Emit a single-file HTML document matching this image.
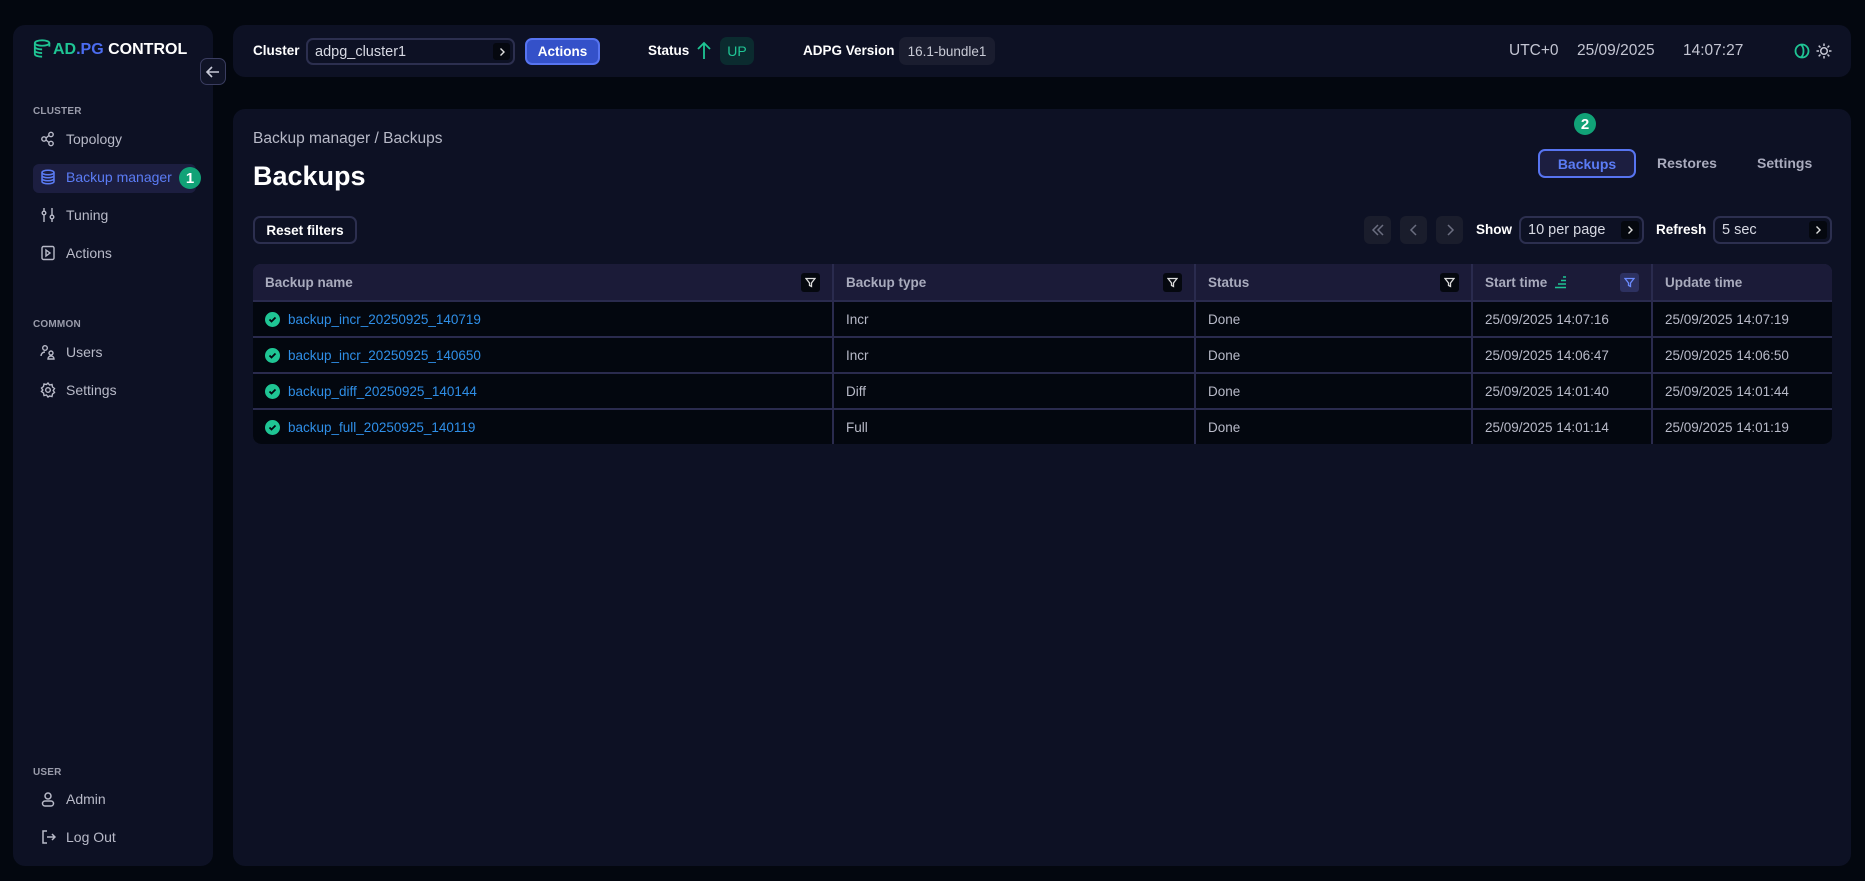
<!DOCTYPE html>
<html><head><meta charset="utf-8"><style>
*{box-sizing:border-box;margin:0;padding:0}
body{width:1865px;height:881px;background:#03070f;font-family:"Liberation Sans",sans-serif;color:#c9cbd6;position:relative;overflow:hidden;font-size:14px}
.abs{position:absolute}
.panel{position:absolute;background:#0d1124;border-radius:12px}
.sec{position:absolute;left:33px;font-size:10px;font-weight:bold;color:#9a9cab;letter-spacing:.2px}
.nav{position:absolute;left:40px;font-size:14px;color:#b8bac8;display:flex;align-items:center;gap:10px}
.nav svg{width:16px;height:16px}
.btn{position:absolute;border:2px solid #2c2f4f;border-radius:7px;display:flex;align-items:center}
.pg{position:absolute;width:27px;height:28px;background:#1a1d2c;border-radius:6px;top:216px;display:flex;align-items:center;justify-content:center}
.th{position:absolute;top:264px;height:36px;background:#1b1b38;font-size:13.5px;color:#a9abbd;font-weight:bold;display:flex;align-items:center;padding-left:12px}
.flt{position:absolute;right:12px;top:9px;width:19px;height:19px;background:#05080f;border-radius:3px;display:flex;align-items:center;justify-content:center}
.cell{position:absolute;height:34px;background:#03070f;font-size:13.5px;color:#b8bac8;display:flex;align-items:center;padding-left:12px}
.lnk{color:#2f8fe8}
.chk{width:15px;height:15px;border-radius:50%;background:#1fc594;display:inline-flex;align-items:center;justify-content:center;margin-right:8px}
</style></head><body>

<div class="panel" style="left:13px;top:25px;width:200px;height:841px"></div>
<svg class="abs" style="left:33px;top:38px" width="20" height="21" viewBox="0 0 22 22" fill="none" stroke="#1fc594" stroke-width="2"><ellipse cx="10" cy="5" rx="8" ry="3"/><path d="M2 5v12c0 2 4 3 8 3M2 9c0 2 4 3 8 3M2 13c0 2 4 3 8 3M18 5v4"/></svg>
<div class="abs" style="left:53px;top:41px;font-size:16px;font-weight:bold;letter-spacing:0"><span style="color:#1fc594">AD</span><span style="color:#4b6cf0">.PG</span> <span style="color:#fff">CONTROL</span></div>
<div class="abs" style="left:200px;top:58px;width:26px;height:27px;border:1.5px solid #3a3d60;border-radius:7px;background:#101427;display:flex;align-items:center;justify-content:center"><svg width="16" height="16" viewBox="0 0 16 16" fill="none" stroke="#c8cad8" stroke-width="1.6"><path d="M14 8H2M7 3L2 8l5 5"/></svg></div>

<div class="sec" style="top:106px">CLUSTER</div>
<div class="nav" style="top:131px"><svg viewBox="0 0 16 16" fill="none" stroke="#b8bac8" stroke-width="1.4"><circle cx="4" cy="8" r="2.2"/><circle cx="11" cy="3.5" r="2.2"/><circle cx="11" cy="12.5" r="2.2"/><path d="M6 7l3-2.5M6 9l3 2.5"/></svg>Topology</div>
<div class="abs" style="left:33px;top:164px;width:163px;height:29px;background:#1c1e40;border-radius:6px"></div>
<div class="nav" style="top:169px;color:#5b7cf5"><svg viewBox="0 0 16 16" fill="none" stroke="#5b7cf5" stroke-width="1.5"><ellipse cx="8" cy="3.5" rx="6" ry="2.3"/><path d="M2 3.5v9c0 1.3 2.7 2.3 6 2.3s6-1 6-2.3v-9M2 6.5c0 1.3 2.7 2.3 6 2.3s6-1 6-2.3M2 9.5c0 1.3 2.7 2.3 6 2.3s6-1 6-2.3"/></svg>Backup manager</div>
<div class="abs" style="left:179px;top:167px;width:22px;height:22px;border-radius:50%;background:#11a277;color:#fff;font-weight:bold;font-size:15px;display:flex;align-items:center;justify-content:center">1</div>
<div class="nav" style="top:207px"><svg viewBox="0 0 16 16" fill="none" stroke="#b8bac8" stroke-width="1.4"><path d="M4 1v14M12 1v14"/><circle cx="4" cy="6" r="1.8" fill="#0d1124"/><circle cx="12" cy="10" r="1.8" fill="#0d1124"/></svg>Tuning</div>
<div class="nav" style="top:245px"><svg viewBox="0 0 16 16" fill="none" stroke="#b8bac8" stroke-width="1.4"><rect x="2" y="1.5" width="12" height="13" rx="1.5"/><path d="M6 5l4 3-4 3z"/></svg>Actions</div>

<div class="sec" style="top:319px">COMMON</div>
<div class="nav" style="top:344px"><svg viewBox="0 0 16 16" fill="none" stroke="#b8bac8" stroke-width="1.4"><circle cx="5" cy="4" r="2.3"/><path d="M1 12c0-2.5 2-4 4-4"/><circle cx="11" cy="9" r="2"/><path d="M8 15c0-2 1.5-3 3-3s3 1 3 3z"/></svg>Users</div>
<div class="nav" style="top:382px"><svg viewBox="0 0 16 16" fill="none" stroke="#b8bac8" stroke-width="1.4"><circle cx="8" cy="8" r="2.3"/><path d="M8 1l1.5 2 2.5-.5.5 2.5 2 1.5-1.3 2 1.3 2-2 1.5-.5 2.5-2.5-.5L8 15l-1.5-2-2.5.5-.5-2.5-2-1.5L2.8 8 1.5 6l2-1.5.5-2.5 2.5.5z"/></svg>Settings</div>

<div class="sec" style="top:767px">USER</div>
<div class="nav" style="top:791px"><svg viewBox="0 0 16 16" fill="none" stroke="#b8bac8" stroke-width="1.5"><circle cx="8" cy="5" r="3"/><rect x="2.5" y="10" width="11" height="5" rx="2.5"/></svg>Admin</div>
<div class="nav" style="top:829px"><svg viewBox="0 0 16 16" fill="none" stroke="#b8bac8" stroke-width="1.5"><path d="M7 2H3v12h4M7 8h8M12 5l3 3-3 3"/></svg>Log Out</div>

<div class="panel" style="left:233px;top:25px;width:1618px;height:52px"></div>
<div class="abs" style="left:253px;top:43px;font-size:13.5px;font-weight:bold;color:#fff">Cluster</div>
<div class="btn" style="left:306px;top:38px;width:209px;height:27px;padding-left:7px;font-size:14.5px;color:#d8dae4">adpg_cluster1<div class="abs" style="right:3px;top:3px;width:17px;height:17px;background:#05080f;border-radius:3px;display:flex;align-items:center;justify-content:center"><svg width="10" height="10" viewBox="0 0 10 10" fill="none" stroke="#ddd" stroke-width="1.4"><path d="M3.5 1.5L7 5l-3.5 3.5"/></svg></div></div>
<div class="abs" style="left:525px;top:38px;width:75px;height:27px;background:#3451c9;border:2px solid #5774f0;border-radius:7px;color:#fff;font-weight:bold;font-size:13.5px;display:flex;align-items:center;justify-content:center">Actions</div>
<div class="abs" style="left:648px;top:43px;font-size:13.5px;font-weight:bold;color:#fff">Status</div>
<svg class="abs" style="left:696px;top:41px" width="16" height="19" viewBox="0 0 16 19" fill="none" stroke="#1fc594" stroke-width="1.8"><path d="M8 18V2M2 8l6-6 6 6"/></svg>
<div class="abs" style="left:720px;top:37px;width:34px;height:28px;background:#0b2b2f;border-radius:7px;color:#1fc594;font-size:14px;display:flex;align-items:center;justify-content:center">UP</div>
<div class="abs" style="left:803px;top:43px;font-size:13.5px;font-weight:bold;color:#fff">ADPG Version</div>
<div class="abs" style="left:899px;top:37px;width:96px;height:28px;background:#1a1d2f;border-radius:7px;color:#c9cbd6;font-size:13.5px;display:flex;align-items:center;justify-content:center">16.1-bundle1</div>
<div class="abs" style="left:1509px;top:42px;font-size:15.5px;color:#c3c5d2">UTC+0</div>
<div class="abs" style="left:1577px;top:42px;font-size:15.5px;color:#c3c5d2">25/09/2025</div>
<div class="abs" style="left:1683px;top:42px;font-size:15.5px;color:#c3c5d2">14:07:27</div>
<svg class="abs" style="left:1794px;top:43px" width="16" height="16" viewBox="0 0 16 16" fill="none" stroke="#1fc594" stroke-width="1.8"><circle cx="8" cy="8" r="6.5"/><path d="M7 1.8c2 1.5 2.5 3.5 2.5 6.2S9 12.7 7 14.2"/></svg>
<svg class="abs" style="left:1816px;top:43px" width="16" height="16" viewBox="0 0 16 16" fill="none" stroke="#c3c5d2" stroke-width="1.5"><circle cx="8" cy="8" r="3.3"/><path d="M8 0.5v2.5M8 13v2.5M0.5 8H3M13 8h2.5M2.7 2.7l1.8 1.8M11.5 11.5l1.8 1.8M2.7 13.3l1.8-1.8M11.5 4.5l1.8-1.8"/></svg>

<div class="panel" style="left:233px;top:109px;width:1618px;height:757px"></div>
<div class="abs" style="left:253px;top:130px;font-size:15.5px;color:#b8bac8">Backup manager / Backups</div>
<div class="abs" style="left:253px;top:161px;font-size:27px;font-weight:bold;color:#fff">Backups</div>
<div class="abs" style="left:1574px;top:113px;width:22px;height:22px;border-radius:50%;background:#11a277;color:#fff;font-weight:bold;font-size:15px;display:flex;align-items:center;justify-content:center">2</div>
<div class="abs" style="left:1538px;top:149px;width:98px;height:29px;border:2px solid #5774f0;background:#1c1e40;border-radius:7px;color:#5b7cf5;font-weight:bold;font-size:14px;display:flex;align-items:center;justify-content:center">Backups</div>
<div class="abs" style="left:1657px;top:155px;font-size:14px;font-weight:bold;color:#a9abbd">Restores</div>
<div class="abs" style="left:1757px;top:155px;font-size:14px;font-weight:bold;color:#a9abbd">Settings</div>

<div class="btn" style="left:253px;top:216px;width:104px;height:28px;justify-content:center;font-size:13.5px;font-weight:bold;color:#fff">Reset filters</div>

<div class="pg" style="left:1364px"><svg width="14" height="14" viewBox="0 0 14 14" fill="none" stroke="#6b6e80" stroke-width="1.5"><path d="M7 2L2 7l5 5M12 2L7 7l5 5"/></svg></div>
<div class="pg" style="left:1400px"><svg width="14" height="14" viewBox="0 0 14 14" fill="none" stroke="#6b6e80" stroke-width="1.5"><path d="M9 2L4 7l5 5"/></svg></div>
<div class="pg" style="left:1436px"><svg width="14" height="14" viewBox="0 0 14 14" fill="none" stroke="#6b6e80" stroke-width="1.5"><path d="M5 2l5 5-5 5"/></svg></div>
<div class="abs" style="left:1476px;top:222px;font-size:13.5px;font-weight:bold;color:#fff">Show</div>
<div class="btn" style="left:1519px;top:216px;width:125px;height:28px;padding-left:7px;font-size:14.5px;color:#d8dae4">10 per page<div class="abs" style="right:3px;top:3px;width:18px;height:18px;background:#05080f;border-radius:3px;display:flex;align-items:center;justify-content:center"><svg width="10" height="10" viewBox="0 0 10 10" fill="none" stroke="#ddd" stroke-width="1.4"><path d="M3.5 1.5L7 5l-3.5 3.5"/></svg></div></div>
<div class="abs" style="left:1656px;top:222px;font-size:13.5px;font-weight:bold;color:#fff">Refresh</div>
<div class="btn" style="left:1713px;top:216px;width:119px;height:28px;padding-left:7px;font-size:14.5px;color:#d8dae4">5 sec<div class="abs" style="right:3px;top:3px;width:18px;height:18px;background:#05080f;border-radius:3px;display:flex;align-items:center;justify-content:center"><svg width="10" height="10" viewBox="0 0 10 10" fill="none" stroke="#ddd" stroke-width="1.4"><path d="M3.5 1.5L7 5l-3.5 3.5"/></svg></div></div>

<div class="abs" style="left:253px;top:264px;width:1579px;height:180px;background:#2a2b4e;border-radius:8px;overflow:hidden">
<div class="th" style="left:0;top:0;width:579px">Backup name<div class="flt"><svg width="11" height="11" viewBox="0 0 11 11" fill="none" stroke="#ddd" stroke-width="1.3"><path d="M1 1.5h9L6.5 6v3.5l-2-1V6z"/></svg></div></div>
<div class="th" style="left:581px;top:0;width:360px">Backup type<div class="flt"><svg width="11" height="11" viewBox="0 0 11 11" fill="none" stroke="#ddd" stroke-width="1.3"><path d="M1 1.5h9L6.5 6v3.5l-2-1V6z"/></svg></div></div>
<div class="th" style="left:943px;top:0;width:275px">Status<div class="flt"><svg width="11" height="11" viewBox="0 0 11 11" fill="none" stroke="#ddd" stroke-width="1.3"><path d="M1 1.5h9L6.5 6v3.5l-2-1V6z"/></svg></div></div>
<div class="th" style="left:1220px;top:0;width:178px">Start time<svg style="margin-left:7px" width="14" height="14" viewBox="0 0 14 14" stroke="#1fc594" stroke-width="1.6"><path d="M9 2h3M7 5.5h5M4 9h8M1 12.5h11"/></svg><div class="flt" style="background:#2d3160"><svg width="11" height="11" viewBox="0 0 11 11" fill="none" stroke="#6b8cff" stroke-width="1.3"><path d="M1 1.5h9L6.5 6v3.5l-2-1V6z"/></svg></div></div>
<div class="th" style="left:1400px;top:0;width:179px">Update time</div>

<div class="cell" style="left:0;top:38px;width:579px"><span class="chk"><svg width="9" height="9" viewBox="0 0 9 9" fill="none" stroke="#03070f" stroke-width="1.8"><path d="M1.5 4.5l2 2 4-4"/></svg></span><span class="lnk">backup_incr_20250925_140719</span></div>
<div class="cell" style="left:581px;top:38px;width:360px">Incr</div>
<div class="cell" style="left:943px;top:38px;width:275px">Done</div>
<div class="cell" style="left:1220px;top:38px;width:178px">25/09/2025 14:07:16</div>
<div class="cell" style="left:1400px;top:38px;width:179px">25/09/2025 14:07:19</div>

<div class="cell" style="left:0;top:74px;width:579px"><span class="chk"><svg width="9" height="9" viewBox="0 0 9 9" fill="none" stroke="#03070f" stroke-width="1.8"><path d="M1.5 4.5l2 2 4-4"/></svg></span><span class="lnk">backup_incr_20250925_140650</span></div>
<div class="cell" style="left:581px;top:74px;width:360px">Incr</div>
<div class="cell" style="left:943px;top:74px;width:275px">Done</div>
<div class="cell" style="left:1220px;top:74px;width:178px">25/09/2025 14:06:47</div>
<div class="cell" style="left:1400px;top:74px;width:179px">25/09/2025 14:06:50</div>

<div class="cell" style="left:0;top:110px;width:579px"><span class="chk"><svg width="9" height="9" viewBox="0 0 9 9" fill="none" stroke="#03070f" stroke-width="1.8"><path d="M1.5 4.5l2 2 4-4"/></svg></span><span class="lnk">backup_diff_20250925_140144</span></div>
<div class="cell" style="left:581px;top:110px;width:360px">Diff</div>
<div class="cell" style="left:943px;top:110px;width:275px">Done</div>
<div class="cell" style="left:1220px;top:110px;width:178px">25/09/2025 14:01:40</div>
<div class="cell" style="left:1400px;top:110px;width:179px">25/09/2025 14:01:44</div>

<div class="cell" style="left:0;top:146px;width:579px"><span class="chk"><svg width="9" height="9" viewBox="0 0 9 9" fill="none" stroke="#03070f" stroke-width="1.8"><path d="M1.5 4.5l2 2 4-4"/></svg></span><span class="lnk">backup_full_20250925_140119</span></div>
<div class="cell" style="left:581px;top:146px;width:360px">Full</div>
<div class="cell" style="left:943px;top:146px;width:275px">Done</div>
<div class="cell" style="left:1220px;top:146px;width:178px">25/09/2025 14:01:14</div>
<div class="cell" style="left:1400px;top:146px;width:179px">25/09/2025 14:01:19</div>
</div>

</body></html>
